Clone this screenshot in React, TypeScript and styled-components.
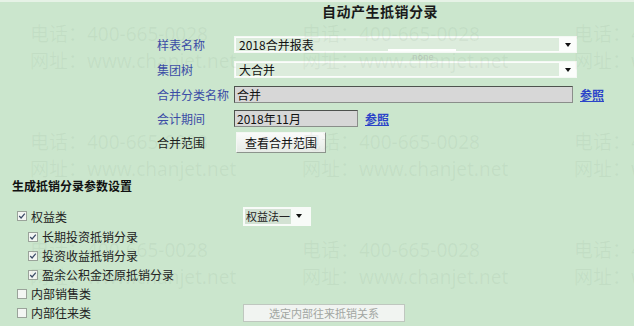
import React from 'react';
import styled, { createGlobalStyle } from 'styled-components';

const GlobalStyle = createGlobalStyle`
    html, body {
        margin: 0;
        padding: 0;
        background: #cbe6cd;
    }
    body {
        font-family: "Noto Sans CJK SC", "Noto Sans", sans-serif;
        font-size: 12px;
        color: #111;
    }
`;

const Page = styled.div`
    position: relative;
    width: 634px;
    height: 326px;
    overflow: hidden;
    background: #cbe6cd;
    border-top: 2px solid #e6f2e6;
    box-sizing: border-box;
`;

const Title = styled.div`
    height: 30px;
    line-height: 18px;
    padding-left: 322px;
    font-size: 14px;
    font-weight: bold;
    letter-spacing: 0.5px;
    color: #1a1a1a;
`;

const Form = styled.div`
    display: grid;
    grid-template-columns: 77px auto;
    grid-template-rows: 25px 25px 24px 24px 25px;
    align-items: center;
    padding-left: 157px;
`;

const Label = styled.div<{ $plain?: boolean }>`
    font-size: 12px;
    color: ${(p) => (p.$plain ? '#1a1a1a' : '#3b4ca6')};
`;

const Field = styled.div`
    display: flex;
    align-items: center;
    gap: 7px;
`;

const SelectBox = styled.div`
    position: relative;
    display: flex;
    align-items: stretch;
    width: 343px;
    height: 17px;
    box-sizing: border-box;
    border: 1px solid #f4f8f4;
    background: #fbfdfb;
`;

const SelectText = styled.div`
    flex: 1;
    display: flex;
    align-items: center;
    padding-left: 3px;
    margin: 1px;
    background: #dcecdc;
    font-size: 12px;
    color: #111;
`;

const Arrow = styled.div`
    width: 16px;
    display: flex;
    align-items: center;
    justify-content: center;
`;

const Glitch = styled.div`
    position: absolute;
    left: 153px;
    top: 12px;
    width: 68px;
    height: 2px;
    background: #ffffff;
`;

const GlitchText = styled.div`
    position: absolute;
    left: 177px;
    top: 15px;
    font-size: 9px;
    line-height: 9px;
    color: #b7c8b8;
`;

const TextInput = styled.div<{ $w: number }>`
    width: ${(p) => p.$w}px;
    height: 17px;
    box-sizing: border-box;
    border: 1px solid #4e524e;
    border-right-color: #8a8e8a;
    border-bottom-color: #8a8e8a;
    background: #d7d7d7;
    padding-left: 2px;
    line-height: 15px;
    font-size: 12px;
    color: #111;
`;

const RefLink = styled.a`
    font-size: 12px;
    font-weight: bold;
    color: #2b44c8;
    text-decoration: underline;
    cursor: pointer;
`;

const Button = styled.button`
    margin-left: 2px;
    width: 90px;
    height: 21px;
    padding: 0;
    border: 1px solid #8c948c;
    border-top-color: #f4f7f4;
    border-left-color: #f4f7f4;
    background: linear-gradient(#fafbfa, #e6ebe6);
    font-family: inherit;
    font-size: 12px;
    color: #111;
`;

const SectionTitle = styled.div`
    margin-top: 23px;
    padding-left: 12px;
    line-height: 16px;
    font-size: 12px;
    font-weight: bold;
    color: #111;
`;

const Options = styled.div`
    margin-top: 11px;
    display: grid;
    grid-template-columns: 226px auto;
    grid-template-rows: 22px repeat(5, 19px);
    align-items: center;
    padding-left: 17px;
`;

const OptionRow = styled.label<{ $indent?: boolean }>`
    grid-column: 1;
    display: flex;
    align-items: center;
    gap: 4px;
    padding-left: ${(p) => (p.$indent ? 11 : 0)}px;
    font-size: 12px;
    color: #222;
    white-space: nowrap;
`;

const Box = styled.span`
    width: 10px;
    height: 10px;
    box-sizing: border-box;
    border: 1px solid #9aa39a;
    background: #f3f6f3;
    display: inline-flex;
    align-items: center;
    justify-content: center;
`;

const SmallSelect = styled.div`
    grid-column: 2;
    grid-row: 1;
    display: flex;
    align-items: center;
    width: 68px;
    height: 19px;
    box-sizing: border-box;
    background: #f8fbf8;
    padding-left: 2px;
    white-space: nowrap;
`;

const SmallSelectText = styled.span`
    background: #d3e2d3;
    padding: 0 1px;
    line-height: 15px;
    font-size: 11px;
    color: #222;
`;

const DisabledButton = styled.button`
    grid-column: 2;
    grid-row: 6;
    width: 162px;
    height: 18px;
    padding: 0;
    border: 1px solid #bfc7bf;
    background: #f1f4f1;
    font-family: inherit;
    font-size: 11px;
    color: #a2a6a2;
`;

const Watermark = styled.div`
    position: absolute;
    left: 30px;
    top: 19px;
    display: grid;
    grid-template-columns: repeat(3, 272px);
    grid-auto-rows: 108px;
    pointer-events: none;
`;

const Tile = styled.div`
    font-family: "Noto Sans", "Noto Sans CJK SC", sans-serif;
    font-size: 19px;
    line-height: 27px;
    white-space: nowrap;
    color: rgba(110, 135, 112, 0.09);
`;

const DownArrow = () => (
    <svg width="6" height="4" viewBox="0 0 6 4">
        <path d="M0 0h6L3 4z" fill="#111" />
    </svg>
);

const Check = () => (
    <svg width="8" height="8" viewBox="0 0 8 8">
        <path d="M1.2 4l1.9 2L6.8 1.6" stroke="#3a4a66" strokeWidth="1.2" fill="none" />
    </svg>
);

type OptionProps = { text: string; checked?: boolean; indent?: boolean };

const Option = ({ text, checked, indent }: OptionProps) => (
    <OptionRow $indent={indent}>
        <Box>{checked && <Check />}</Box>
        {text}
    </OptionRow>
);

export default function App() {
    const tiles = Array.from({ length: 9 });
    return (
        <>
            <GlobalStyle />
            <Page>
                <Title>自动产生抵销分录</Title>
                <Form>
                    <Label>样表名称</Label>
                    <SelectBox>
                        <SelectText>2018合并报表</SelectText>
                        <Arrow>
                            <DownArrow />
                        </Arrow>
                        <Glitch />
                        <GlitchText>none</GlitchText>
                    </SelectBox>
                    <Label>集团树</Label>
                    <SelectBox>
                        <SelectText>大合并</SelectText>
                        <Arrow>
                            <DownArrow />
                        </Arrow>
                    </SelectBox>
                    <Label>合并分类名称</Label>
                    <Field>
                        <TextInput $w={339}>合并</TextInput>
                        <RefLink>参照</RefLink>
                    </Field>
                    <Label>会计期间</Label>
                    <Field>
                        <TextInput $w={124}>2018年11月</TextInput>
                        <RefLink>参照</RefLink>
                    </Field>
                    <Label $plain>合并范围</Label>
                    <Field>
                        <Button>查看合并范围</Button>
                    </Field>
                </Form>
                <SectionTitle>生成抵销分录参数设置</SectionTitle>
                <Options>
                    <Option text="权益类" checked />
                    <SmallSelect>
                        <SmallSelectText>权益法一</SmallSelectText>
                        <Arrow>
                            <DownArrow />
                        </Arrow>
                    </SmallSelect>
                    <Option text="长期投资抵销分录" checked indent />
                    <Option text="投资收益抵销分录" checked indent />
                    <Option text="盈余公积金还原抵销分录" checked indent />
                    <Option text="内部销售类" />
                    <Option text="内部往来类" />
                    <DisabledButton disabled>选定内部往来抵销关系</DisabledButton>
                </Options>
                <Watermark>
                    {tiles.map((_, i) => (
                        <Tile key={i}>
                            电话：400-665-0028
                            <br />
                            网址：www.chanjet.net
                        </Tile>
                    ))}
                </Watermark>
            </Page>
        </>
    );
}
